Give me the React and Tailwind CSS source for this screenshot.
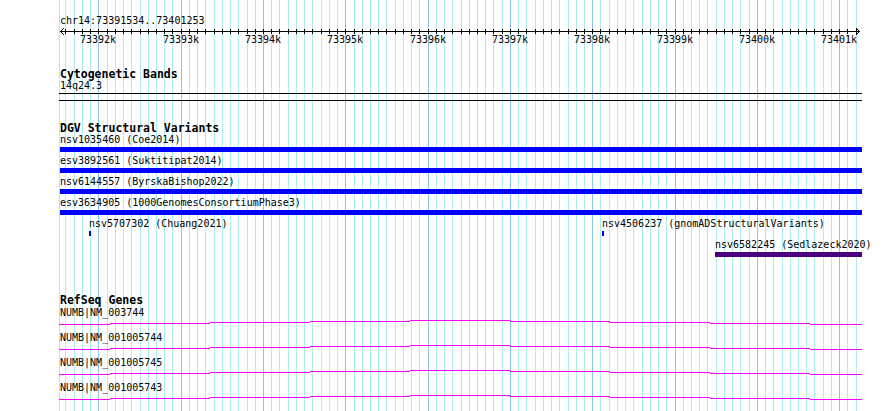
import React from "react";

const START = 73391534;
const END = 73401253;
const X0 = 60;
const W = 800;
const px = (bp) => X0 + ((bp - START) * W) / (END - START);

const grid = [{ x: 59.5, major: false }];
for (let bp = 73391600; bp <= 73401200; bp += 100) {
  grid.push({ x: Math.round(px(bp)) + 0.5, major: bp % 1000 === 0 });
}
const majors = [];
for (let k = 73392; k <= 73401; k++) majors.push({ k, x: Math.round(px(k * 1000)) });

const stairX = [59, 110, 210, 310, 410, 510, 610, 710, 810, 862];
const stairY = [5, 4, 3, 2, 1, 2, 3, 4, 5];
const stairPath = stairY
  .map((y, i) => `M${stairX[i]} ${y + 0.5}H${stairX[i + 1]}`)
  .join("");

const dgvFull = [
  "nsv1035460 (Coe2014)",
  "esv3892561 (Suktitipat2014)",
  "nsv6144557 (ByrskaBishop2022)",
  "esv3634905 (1000GenomesConsortiumPhase3)",
];

const genes = ["NUMB|NM_003744", "NUMB|NM_001005744", "NUMB|NM_001005745", "NUMB|NM_001005743"];

function Feature({ x, w, label, color }) {
  return (
    <div className="absolute top-0 flex flex-col" style={{ left: x }}>
      <div className="h-[12px] leading-[12px] text-[10px] whitespace-nowrap">{label}</div>
      <div className="mt-px h-[5px]" style={{ width: w, background: color }} />
    </div>
  );
}

function Title({ children, className = "" }) {
  return (
    <div className={`ml-[60px] h-[12px] leading-[12px] text-[11.5px] font-bold whitespace-nowrap ${className}`}>
      {children}
    </div>
  );
}

export default function App() {
  return (
    <div className="relative w-[890px] h-[411px] overflow-hidden bg-white text-black font-['DejaVu_Sans_Mono',monospace]">
      <svg className="absolute inset-0" width="890" height="411">
        {grid.map((g, i) => (
          <line key={i} x1={g.x} x2={g.x} y1="0" y2="411" stroke={g.major ? "#88c4ec" : "#b0ecf0"} strokeWidth="1" />
        ))}
      </svg>

      <div className="relative flex flex-col">
        {/* Ruler */}
        <div className="mt-[15px] ml-[60px] h-[12px] leading-[12px] text-[10px] whitespace-nowrap">
          chr14:73391534..73401253
        </div>
        <svg width="890" height="7" className="block overflow-visible">
          <line x1="60" x2="860" y1="4.5" y2="4.5" stroke="#000" strokeWidth="1" />
          {grid.slice(1).map((g, i) => (
            <line key={i} x1={g.x} x2={g.x} y1="2" y2="7" stroke="#000" strokeWidth="1" />
          ))}
          <polyline points="64,1 60.5,4.5 64,8" fill="none" stroke="#000" strokeWidth="1" />
          <polyline points="856,1 859.5,4.5 856,8" fill="none" stroke="#000" strokeWidth="1" />
        </svg>
        <div className="relative h-[12px] leading-[12px] text-[10px]">
          {majors.map((m) => (
            <span key={m.k} className="absolute top-0 w-[36px] text-center" style={{ left: m.x - 18 }}>
              {m.k}k
            </span>
          ))}
        </div>

        {/* Cytogenetic Bands */}
        <Title className="mt-[22px]">Cytogenetic Bands</Title>
        <div className="ml-[60px] h-[12px] leading-[12px] text-[10px]">14q24.3</div>
        <div className="mt-px ml-[59px] w-[803px] h-[8px] border-y border-black" />

        {/* DGV */}
        <Title className="mt-[21px]">DGV Structural Variants</Title>
        {dgvFull.map((label) => (
          <div key={label} className="flex flex-col h-[21px]">
            <div className="ml-[60px] h-[12px] leading-[12px] text-[10px] whitespace-nowrap">{label}</div>
            <div className="mt-px ml-[60px] w-[802px] h-[5px] bg-[#0000ff]" />
          </div>
        ))}
        <div className="relative h-[21px]">
          <Feature x={89} w={2} label="nsv5707302 (Chuang2021)" color="#0000ff" />
          <Feature x={602} w={2} label="nsv4506237 (gnomADStructuralVariants)" color="#0000ff" />
        </div>
        <div className="relative h-[18px]">
          <Feature x={715} w={147} label="nsv6582245 (Sedlazeck2020)" color="#4b0082" />
        </div>

        {/* RefSeq */}
        <Title className="mt-[37px]">RefSeq Genes</Title>
        <div className="mt-px flex flex-col">
          {genes.map((g) => (
            <div key={g} className="flex flex-col h-[25px]">
              <div className="ml-[60px] h-[12px] leading-[12px] text-[10px] whitespace-nowrap">{g}</div>
              <svg width="890" height="13" className="block">
                <path d={stairPath} stroke="#ff00ff" strokeWidth="1" fill="none" />
              </svg>
            </div>
          ))}
        </div>
      </div>
    </div>
  );
}
